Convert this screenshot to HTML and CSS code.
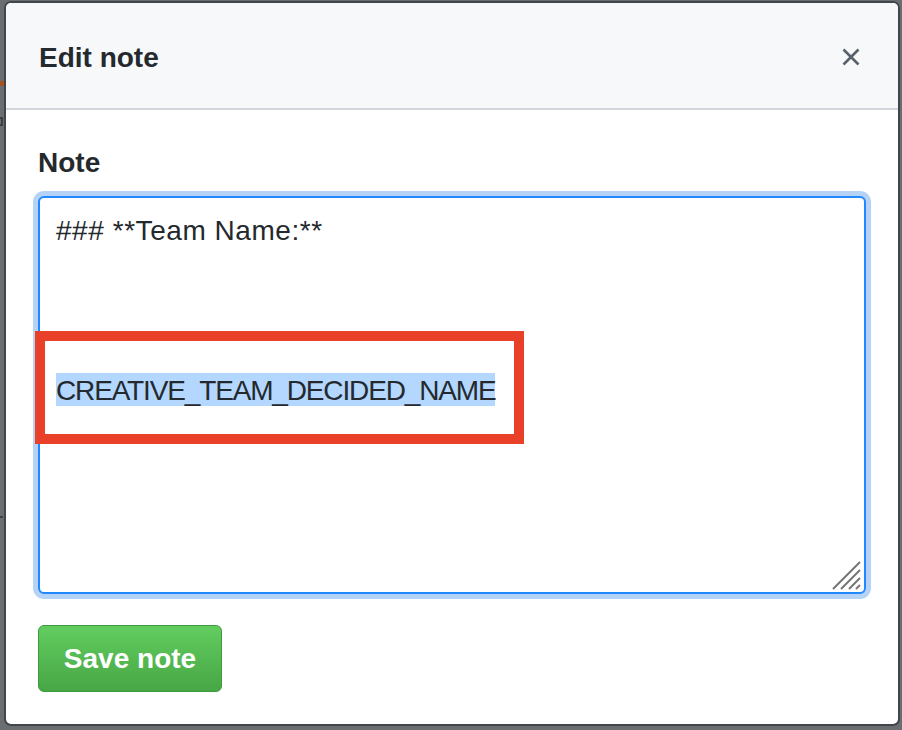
FILE: index.html
```html
<!DOCTYPE html>
<html lang="en">
<head>
<meta charset="utf-8">
<title>Edit note</title>
<link rel="stylesheet" href="styles.css">
</head>
<body>
<div class="backdrop-mark mark-orange"></div>
<div class="backdrop-mark mark-dark"></div>
<div class="backdrop-mark mark-dash"></div>
<div class="modal">
  <div class="modal-header">
    <h2 class="modal-title">Edit note</h2>
    <button class="close-btn" aria-label="Close">
      <svg width="18" height="18" viewBox="0 0 18 18"><path d="M1.5 1.5 L16.5 16.5 M16.5 1.5 L1.5 16.5" stroke="#586069" stroke-width="2.6" stroke-linecap="butt" fill="none"/></svg>
    </button>
  </div>
  <div class="modal-body">
    <label class="field-label">Note</label>
    <div class="note-input">
      <div class="note-text"><span class="line-one">### **Team Name:**</span>



<span class="selected">CREATIVE_TEAM_DECIDED_NAME</span></div>
      <div class="annotation"></div>
      <svg class="grip" width="30" height="30" viewBox="0 0 30 30"><path d="M1 29 L28 2 M9 29 L28 10 M17 29 L28 18" stroke="#767676" stroke-width="2" fill="none"/><path d="M24 29 L28 25" stroke="#767676" stroke-width="2" fill="none"/></svg>
    </div>
    <button class="save-btn">Save note</button>
  </div>
</div>
</body>
</html>
```

FILE: styles.css
```css
html, body {
  margin: 0;
  height: 100%;
}
body {
  background: #6b6e71;
  padding: 1px 2px 0 4px;
  box-sizing: border-box;
  font-family: "Liberation Sans", Arial, sans-serif;
  color: #24292e;
  position: relative;
  overflow: hidden;
}
.backdrop-mark {
  position: absolute;
  left: 0;
  width: 4px;
}
.mark-orange {
  top: 81px;
  height: 5px;
  background: #a9501f;
}
.mark-dark {
  top: 117px;
  height: 9px;
  width: 3px;
  border: 2px solid #3a3f44;
  border-left: none;
  box-sizing: border-box;
}
.mark-dash {
  top: 516px;
  height: 2px;
  width: 3px;
  background: #3e4349;
}
.modal {
  width: 896px;
  box-sizing: border-box;
  border: 2px solid #41464c;
  border-radius: 7px;
  background: #ffffff;
  overflow: hidden;
}
.modal-header {
  height: 107px;
  box-sizing: border-box;
  background: #f6f8fa;
  border-bottom: 2px solid #d1d5da;
  display: flex;
  align-items: center;
  justify-content: space-between;
  padding: 5px 38px 0 33px;
}
.modal-title {
  margin: 0;
  font-size: 28px;
  line-height: 40px;
  font-weight: 700;
  color: #24292e;
}
.close-btn {
  border: none;
  background: transparent;
  padding: 0;
  width: 18px;
  height: 18px;
  display: flex;
  margin-top: -3px;
}
.modal-body {
  padding: 33px 32px 32px 32px;
  display: flex;
  flex-direction: column;
  align-items: flex-start;
}
.field-label {
  font-size: 28px;
  line-height: 40px;
  font-weight: 700;
  margin-bottom: 13px;
}
.note-input {
  position: relative;
  align-self: stretch;
  height: 398px;
  box-sizing: border-box;
  border: 2px solid #2188ff;
  border-radius: 6px;
  box-shadow: 0 0 0 5px #b4d3f7;
  background: #fff;
  padding: 13px 16px;
}
.note-text {
  white-space: pre;
  font-size: 28px;
  line-height: 40px;
  color: #24292e;
}
.line-one {
  letter-spacing: 0.55px;
}
.selected {
  background: #b3d7fe;
  letter-spacing: -1.15px;
  padding: 2px 0 0;
}
.annotation {
  position: absolute;
  left: -5px;
  top: 133px;
  width: 489px;
  height: 113px;
  box-sizing: border-box;
  border: 10px solid #e9402a;
}
.grip {
  position: absolute;
  right: 2px;
  bottom: 2px;
}
.save-btn {
  margin-top: 31px;
  width: 184px;
  height: 67px;
  box-sizing: border-box;
  border: 1px solid #3f9a3f;
  border-radius: 6px;
  background: linear-gradient(180deg, #62cd5f 0%, #47a645 100%);
  color: #ffffff;
  font-family: "Liberation Sans", Arial, sans-serif;
  font-size: 28px;
  font-weight: 700;
  line-height: 40px;
  padding: 0;
}
```
